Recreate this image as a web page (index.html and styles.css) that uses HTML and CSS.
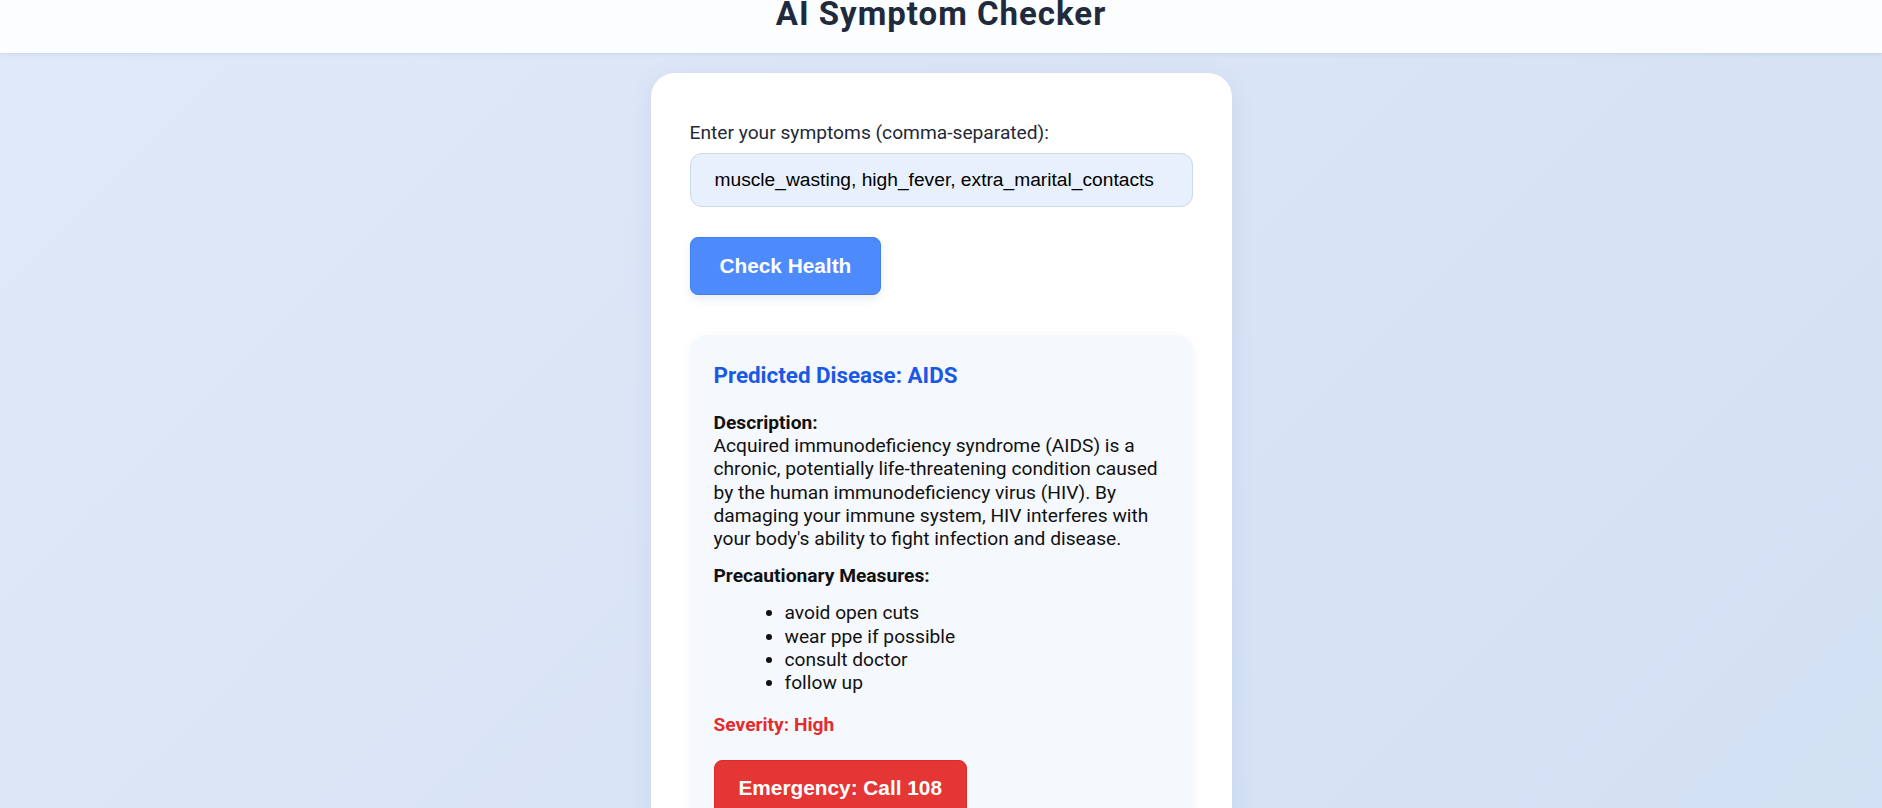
FILE: index.html
```html
<!DOCTYPE html>
<html lang="en">
<head>
<meta charset="utf-8">
<title>AI Symptom Checker</title>
<link rel="stylesheet" href="styles.css">
</head>
<body>
<header class="topbar">
  <h1 class="title">AI Symptom Checker</h1>
</header>
<main class="page">
  <section class="card">
    <label class="field-label" for="symptoms">Enter your symptoms (comma-separated):</label>
    <input class="field-input" id="symptoms" type="text" value="muscle_wasting, high_fever, extra_marital_contacts">
    <button class="btn-check" type="button">Check Health</button>
    <div class="result">
      <h3 class="result-title">Predicted Disease: AIDS</h3>
      <p class="result-desc"><strong>Description:</strong><br>Acquired immunodeficiency syndrome (AIDS) is a chronic, potentially life-threatening condition caused by the human immunodeficiency virus (HIV). By damaging your immune system, HIV interferes with your body's ability to fight infection and disease.</p>
      <p class="result-sub"><strong>Precautionary Measures:</strong></p>
      <ul class="result-list">
        <li>avoid open cuts</li>
        <li>wear ppe if possible</li>
        <li>consult doctor</li>
        <li>follow up</li>
      </ul>
      <p class="severity">Severity: High</p>
      <button class="btn-emergency" type="button">Emergency: Call 108</button>
    </div>
  </section>
</main>
</body>
</html>
```

FILE: styles.css
```css
html {
  overflow: hidden;
}

body {
  margin: 0;
  min-height: 808px;
  font-family: Roboto, "Liberation Sans", Arial, sans-serif;
  background: linear-gradient(135deg, #e0e9f9 0%, #d9e4f6 50%, #d2e0f3 100%);
  color: #111;
}

.topbar {
  height: 53px;
  background: #fcfdff;
  box-shadow: 0 1px 4px rgba(60, 90, 140, 0.12);
  display: flex;
  justify-content: center;
  overflow: hidden;
}

.title {
  margin: -5px 0 0;
  font-family: Roboto, sans-serif;
  font-size: 33px;
  font-weight: 700;
  letter-spacing: 1px;
  line-height: 38.5px;
  color: #1f2b3c;
}

.page {
  display: flex;
  justify-content: center;
  padding-top: 20px;
}

.card {
  width: 581px;
  box-sizing: border-box;
  background: #ffffff;
  border-radius: 24px;
  padding: 48px 39px 40px;
  box-shadow: 0 6px 24px rgba(70, 100, 160, 0.10);
  display: flex;
  flex-direction: column;
  align-items: flex-start;
}

.field-label {
  display: block;
  font-size: 19.2px;
  line-height: 23px;
  color: #1f2937;
  margin-bottom: 9px;
}

.field-input {
  box-sizing: border-box;
  width: 100%;
  margin: 0;
  padding: 15px 24px;
  font-family: "Liberation Sans", Arial, sans-serif;
  font-size: 19.2px;
  color: #000;
  background: #e8f0fd;
  border: 1px solid #cdd8ea;
  border-radius: 12px;
  outline: none;
}

.btn-check {
  margin-top: 30px;
  padding: 16px 29px;
  font-family: "Liberation Sans", Arial, sans-serif;
  font-size: 20.8px;
  font-weight: 700;
  color: #ffffff;
  background: #4d8bfd;
  border: 1px solid #3f7ff3;
  border-radius: 8px;
  box-shadow: 0 4px 10px rgba(40, 70, 130, 0.10);
}

.result {
  align-self: stretch;
  margin-top: 40px;
  padding: 24px;
  background: #f5f8fc;
  border-radius: 16px;
  box-shadow: 0 2px 8px rgba(60, 90, 140, 0.06);
  font-size: 19.2px;
  line-height: 23.2px;
  color: #111;
}

.result-title {
  margin: 3px 0 23px;
  font-size: 22.4px;
  line-height: 26px;
  font-weight: 700;
  color: #1a58e6;
}

.result-desc {
  margin: 0 0 14px;
}

.result-sub {
  margin: 0;
}

.result-list {
  margin: 14px 0 19px;
  padding-left: 71px;
}

.severity {
  margin: 0;
  font-weight: 700;
  color: #e32c2c;
}

.btn-emergency {
  margin-top: 24px;
  padding: 15px 24px;
  font-family: "Liberation Sans", Arial, sans-serif;
  font-size: 20.8px;
  font-weight: 700;
  color: #ffffff;
  background: #e53636;
  border: 1px solid #d92d2d;
  border-radius: 8px;
}
```
